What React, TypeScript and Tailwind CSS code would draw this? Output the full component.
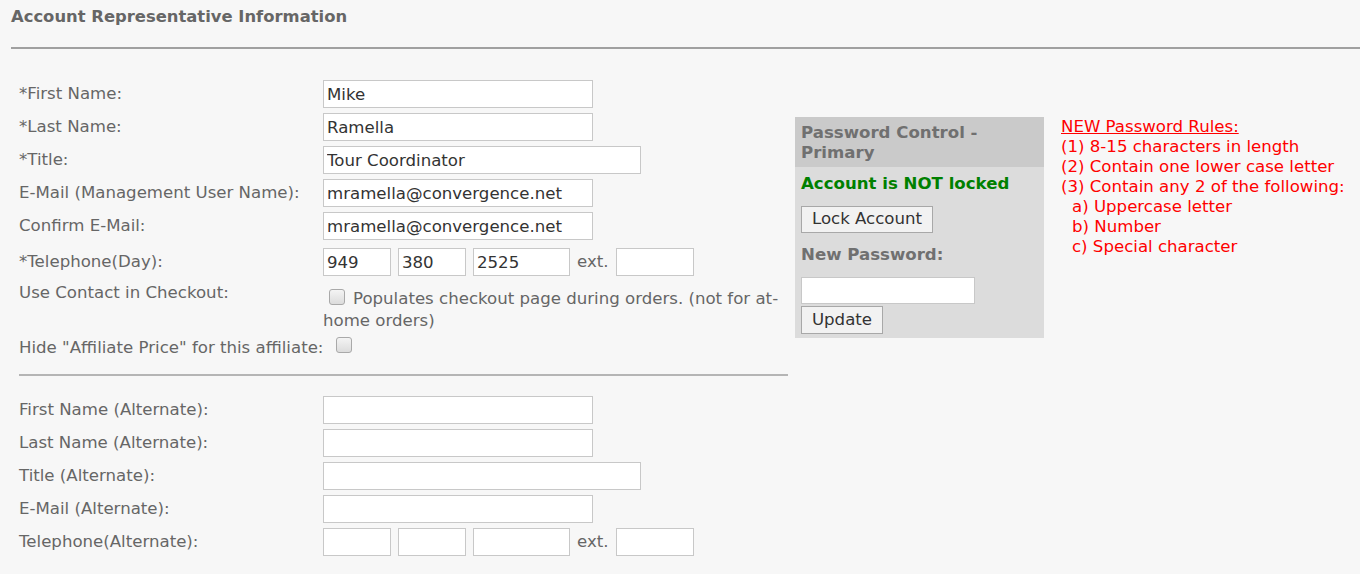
import React from "react";

const font = { fontFamily: '"DejaVu Sans", Verdana, sans-serif' };

const Field = ({ w, value = "" }: { w: string; value?: string }) => (
  <input
    readOnly
    value={value}
    className={`${w} h-[28px] border border-[#c8c8c8] bg-white px-[3px] text-[16.6px] text-[#333] outline-none`}
  />
);

const Check = () => (
  <span className="inline-block h-[16px] w-[16px] rounded-[3px] border border-[#a9a9a9] bg-gradient-to-b from-[#f4f4f4] to-[#dcdcdc]" />
);

const Row = ({ label, children }: { label: string; children: React.ReactNode }) => (
  <div className="flex h-[28px] items-center">
    <div className="w-[304px] shrink-0">{label}</div>
    <div className="flex items-center">{children}</div>
  </div>
);

const Phone = ({ a = "", b = "", c = "" }: { a?: string; b?: string; c?: string }) => (
  <div className="flex items-center gap-[7px]">
    <Field w="w-[68px]" value={a} />
    <Field w="w-[68px]" value={b} />
    <Field w="w-[97px]" value={c} />
    <span>ext.</span>
    <Field w="w-[78px]" />
  </div>
);

export default function App() {
  return (
    <div style={font} className="h-[574px] w-[1360px] overflow-hidden bg-[#f7f7f7] text-[16.6px] text-[#666]">
      <div className="pl-[11px] pt-[6px]">
        <h2 className="text-[16.4px] font-bold leading-[22px] text-[#666]">Account Representative Information</h2>
        <div className="mt-[19px] h-[2px] bg-[#a0a0a0]" />
      </div>

      <div className="flex">
        {/* left form */}
        <div className="ml-[19px] mt-[31px] w-[769px]">
          <div className="flex flex-col gap-[5px]">
            <Row label="*First Name:">
              <Field w="w-[270px]" value="Mike" />
            </Row>
            <Row label="*Last Name:">
              <Field w="w-[270px]" value="Ramella" />
            </Row>
            <Row label="*Title:">
              <Field w="w-[318px]" value="Tour Coordinator" />
            </Row>
            <Row label="E-Mail (Management User Name):">
              <Field w="w-[270px]" value="mramella@convergence.net" />
            </Row>
            <Row label="Confirm E-Mail:">
              <Field w="w-[270px]" value="mramella@convergence.net" />
            </Row>
          </div>
          <div className="mt-[8px]">
            <Row label="*Telephone(Day):">
              <Phone a="949" b="380" c="2525" />
            </Row>
          </div>
          <div className="mt-[5px] flex">
            <div className="w-[304px] shrink-0 pt-[1px] leading-[22px]">Use Contact in Checkout:</div>
            <div className="w-[462px] pt-[7px] leading-[21px]">
              <span className="ml-[6px] mr-[8px] inline-block align-[-1px]">
                <Check />
              </span>
              Populates checkout page during orders. (not for at-home orders)
            </div>
          </div>
          <div className="mt-[5px] flex h-[24px] items-center">
            <span>Hide "Affiliate Price" for this affiliate:</span>
            <span className="ml-[13px] -mt-[6px] inline-flex">
              <Check />
            </span>
          </div>
          <div className="mt-[14px] h-[2px] bg-[#b5b5b5]" />
          <div className="mt-[20px] flex flex-col gap-[5px]">
            <Row label="First Name (Alternate):">
              <Field w="w-[270px]" />
            </Row>
            <Row label="Last Name (Alternate):">
              <Field w="w-[270px]" />
            </Row>
            <Row label="Title (Alternate):">
              <Field w="w-[318px]" />
            </Row>
            <Row label="E-Mail (Alternate):">
              <Field w="w-[270px]" />
            </Row>
            <Row label="Telephone(Alternate):">
              <Phone />
            </Row>
          </div>
        </div>

        {/* password panel */}
        <div className="ml-[7px] mt-[68px] h-[221px] w-[249px] bg-[#dcdcdc]">
          <div className="h-[50px] bg-[#cacaca] px-[6px] pt-[6px] font-bold leading-[20px] text-[#707070]">
            Password Control - Primary
          </div>
          <div className="px-[6px]">
            <div className="mt-[7px] font-bold leading-[20px] text-[#008000]">Account is NOT locked</div>
            <button className="mt-[12px] h-[27px] w-[132px] border border-[#a8a8a8] bg-[#f2f2f2] text-[16.6px] text-[#333]">
              Lock Account
            </button>
            <div className="mt-[12px] font-bold leading-[20px] text-[#707070]">New Password:</div>
            <input
              readOnly
              className="mt-[12px] block h-[27px] w-[174px] border border-[#c8c8c8] bg-white outline-none"
            />
            <button className="mt-[2px] block h-[28px] w-[82px] border border-[#a8a8a8] bg-[#f2f2f2] text-[16.6px] text-[#333]">
              Update
            </button>
          </div>
        </div>

        {/* rules */}
        <div className="ml-[17px] mt-[68px] leading-[20px] text-[#ff0000]">
          <div className="underline">NEW Password Rules:</div>
          <div>(1) 8-15 characters in length</div>
          <div>(2) Contain one lower case letter</div>
          <div>(3) Contain any 2 of the following:</div>
          <div className="pl-[11px]">a) Uppercase letter</div>
          <div className="pl-[11px]">b) Number</div>
          <div className="pl-[11px]">c) Special character</div>
        </div>
      </div>
    </div>
  );
}
